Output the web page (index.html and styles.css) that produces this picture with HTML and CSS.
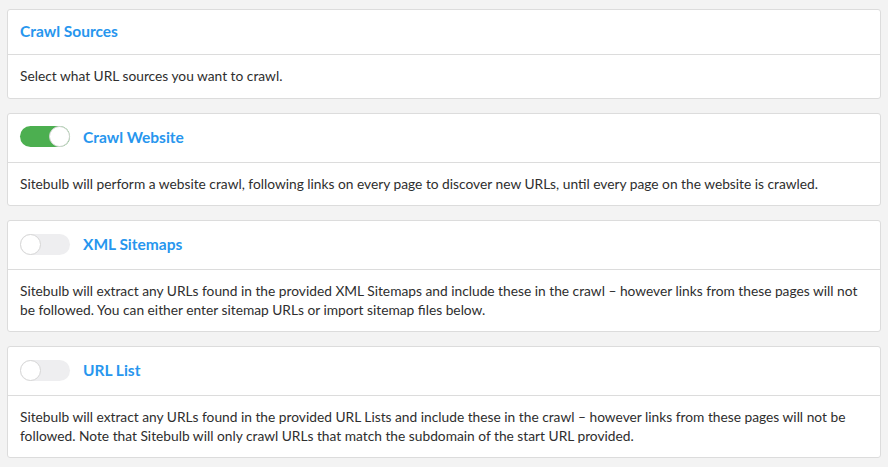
FILE: index.html
```html
<!DOCTYPE html>
<html lang="en">
<head>
<meta charset="utf-8">
<title>Crawl Sources</title>
<link rel="stylesheet" href="styles.css">
</head>
<body>
<div class="page">
  <section class="card">
    <header class="card-header">
      <h3 class="card-title">Crawl Sources</h3>
    </header>
    <div class="card-body">Select what URL sources you want to crawl.</div>
  </section>

  <section class="card">
    <header class="card-header">
      <span class="toggle toggle-on"><span class="knob"></span></span>
      <h3 class="card-title">Crawl Website</h3>
    </header>
    <div class="card-body">Sitebulb will perform a website crawl, following links on every page to discover new URLs, until every page on the website is crawled.</div>
  </section>

  <section class="card">
    <header class="card-header">
      <span class="toggle"><span class="knob"></span></span>
      <h3 class="card-title">XML Sitemaps</h3>
    </header>
    <div class="card-body">Sitebulb will extract any URLs found in the provided XML Sitemaps and include these in the crawl – however links from these pages will not be followed. You can either enter sitemap URLs or import sitemap files below.</div>
  </section>

  <section class="card">
    <header class="card-header">
      <span class="toggle"><span class="knob"></span></span>
      <h3 class="card-title">URL List</h3>
    </header>
    <div class="card-body">Sitebulb will extract any URLs found in the provided URL Lists and include these in the crawl – however links from these pages will not be followed. Note that Sitebulb will only crawl URLs that match the subdomain of the start URL provided.</div>
  </section>
</div>
</body>
</html>
```

FILE: styles.css
```css
html, body {
  margin: 0;
  padding: 0;
  background: #f3f3f3;
}

body {
  font-family: Lato, "Open Sans", sans-serif;
  font-size: 13.75px;
  color: #333;
}

.page {
  padding: 9px 7px 0 7px;
  width: 874px;
  display: flex;
  flex-direction: column;
  gap: 14px;
}

.card {
  background: #fff;
  border: 1px solid #dcdcdc;
  border-radius: 3px;
}

.card-header {
  display: flex;
  align-items: center;
  gap: 13px;
  padding: 9px 12px 11px 12px;
  border-bottom: 1px solid #dcdcdc;
}

.card-title {
  margin: 0;
  font-size: 15.5px;
  font-weight: 700;
  line-height: 24px;
  color: #2796ee;
}

.card-header .toggle + .card-title {
  line-height: 28px;
}

.card-body {
  padding: 12px 12px;
  line-height: 18.5px;
  color: #2e2e2e;
}

.toggle {
  position: relative;
  display: inline-block;
  width: 50px;
  height: 21px;
  border-radius: 11px;
  background: #eeeef0;
  flex: none;
}

.toggle-on {
  background: #4caf50;
}

.knob {
  position: absolute;
  top: 0;
  left: 0;
  width: 19px;
  height: 19px;
  border-radius: 50%;
  background: #fff;
  border: 1px solid #d6d6d6;
}

.toggle-on .knob {
  left: auto;
  right: 0;
}
```
